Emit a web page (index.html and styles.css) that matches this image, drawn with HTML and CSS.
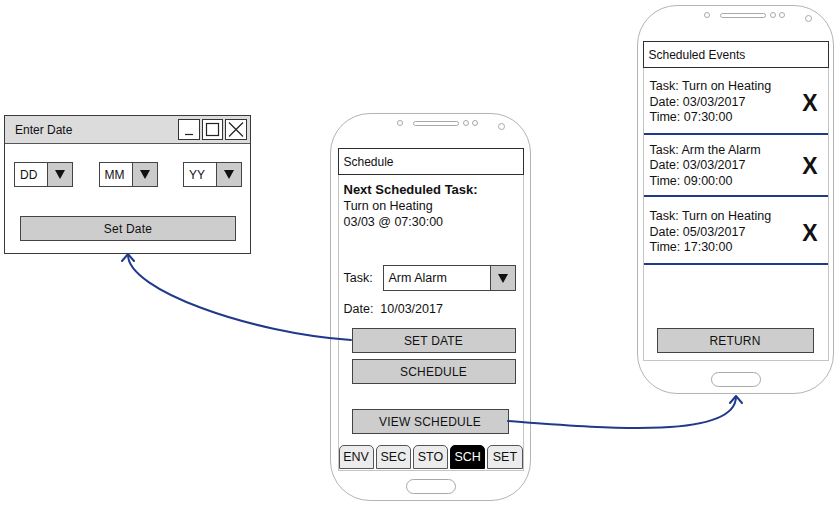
FILE: index.html
```html
<!DOCTYPE html>
<html>
<head>
<meta charset="utf-8">
<link rel="stylesheet" href="styles.css">
</head>
<body>
<div class="canvas">
  <div class="window">
    <div class="win-title">
      <span class="win-name">Enter Date</span>
      <div class="win-ctrls">
        <span class="ctrl"><svg width="20" height="19" viewBox="0 0 20 19"><path d="M6 14.5h8" stroke="#222" stroke-width="1.2" fill="none"/></svg></span>
        <span class="ctrl"><svg width="19" height="19" viewBox="0 0 19 19"><rect x="3.5" y="3.5" width="12" height="12" stroke="#222" stroke-width="1.2" fill="none"/></svg></span>
        <span class="ctrl"><svg width="20" height="19" viewBox="0 0 20 19"><path d="M3 2.5l14 14M17 2.5l-14 14" stroke="#222" stroke-width="1.2" fill="none"/></svg></span>
      </div>
    </div>
    <div class="win-body">
      <div class="date-row">
        <div class="combo small"><span class="combo-text">DD</span><span class="combo-arrow"><i class="tri"></i></span></div>
        <div class="combo small"><span class="combo-text">MM</span><span class="combo-arrow"><i class="tri"></i></span></div>
        <div class="combo small"><span class="combo-text">YY</span><span class="combo-arrow"><i class="tri"></i></span></div>
      </div>
      <div class="btn wide">Set Date</div>
    </div>
  </div>

  <div class="phone phone-a">
    <div class="sensors">
      <i class="dot"></i><i class="pill"></i><i class="dot"></i><i class="dot d2"></i><i class="cam"></i>
    </div>
    <div class="screen screen-a">
      <div class="titlebox">Schedule</div>
      <div class="next">
        <div class="bold">Next Scheduled Task:</div>
        <div>Turn on Heating</div>
        <div>03/03 @ 07:30:00</div>
      </div>
      <div class="task-row">
        <span class="lbl">Task:</span>
        <div class="combo task"><span class="combo-text">Arm Alarm</span><span class="combo-arrow"><i class="tri"></i></span></div>
      </div>
      <div class="date-line">Date:&nbsp; 10/03/2017</div>
      <div class="btn b1">SET DATE</div>
      <div class="btn b2">SCHEDULE</div>
      <div class="btn b3">VIEW SCHEDULE</div>
      <div class="tabs">
        <span class="tab">ENV</span>
        <span class="tab">SEC</span>
        <span class="tab">STO</span>
        <span class="tab active">SCH</span>
        <span class="tab">SET</span>
      </div>
    </div>
    <div class="home"></div>
  </div>

  <div class="phone phone-b">
    <div class="sensors">
      <i class="dot"></i><i class="pill"></i><i class="dot"></i><i class="dot d2"></i><i class="cam"></i>
    </div>
    <div class="screen screen-b">
      <div class="titlebox">Scheduled Events</div>
      <div class="event ev1">
        <div class="ev-text">
          <div>Task: Turn on Heating</div>
          <div>Date: 03/03/2017</div>
          <div>Time: 07:30:00</div>
        </div>
        <span class="ex">X</span>
      </div>
      <div class="event ev2">
        <div class="ev-text">
          <div>Task: Arm the Alarm</div>
          <div>Date: 03/03/2017</div>
          <div>Time: 09:00:00</div>
        </div>
        <span class="ex">X</span>
      </div>
      <div class="event ev3">
        <div class="ev-text">
          <div>Task: Turn on Heating</div>
          <div>Date: 05/03/2017</div>
          <div>Time: 17:30:00</div>
        </div>
        <span class="ex">X</span>
      </div>
      <div class="btn ret">RETURN</div>
    </div>
    <div class="home"></div>
  </div>

  <svg class="arrows" width="840" height="508" viewBox="0 0 840 508">
    <path d="M351,340 C250,333 128,290 128,255" />
    <path d="M122,261 L128,254 L134,261" />
    <path d="M508,421 C600,428 735,440 736,397" />
    <path d="M730,403 L736,396 L742,403" />
  </svg>
</div>
</body>
</html>
```
FILE: styles.css
```css
* { box-sizing: border-box; }
html, body { margin: 0; padding: 0; background: #fff; }
body {
  font-family: "Liberation Sans", Arial, sans-serif;
  font-size: 12.5px;
  color: #111;
}
.canvas { position: relative; width: 840px; height: 508px; overflow: hidden; }

/* ---------- window ---------- */
.window {
  position: absolute; left: 4px; top: 115px;
  width: 247px; height: 139px;
  border: 1.5px solid #3a3a3a;
  background: #fff;
  display: flex; flex-direction: column;
}
.win-title {
  height: 28px;
  background: #dcdcdc;
  border-bottom: 1.5px solid #555;
  display: flex; align-items: center; justify-content: space-between;
  padding: 0 3px 0 10px;
}
.win-name { font-size: 12px; }
.win-ctrls { display: flex; gap: 2px; }
.ctrl {
  display: flex; width: 22px; height: 21px;
  border: 1px solid #333; background: #fff;
  align-items: center; justify-content: center;
}
.ctrl:nth-child(2) { width: 21px; }
.win-body { padding: 18px 8px 0 9px; }
.date-row { display: flex; justify-content: space-between; }

.combo {
  display: flex; height: 25px;
  border: 1px solid #444; background: #fff;
}
.combo.small { width: 59px; }
.combo-text { flex: 1; display: flex; align-items: center; padding-left: 5px; font-size: 12px; }
.combo-arrow {
  width: 25px; background: #cbcbcb; border-left: 1px solid #444;
  display: flex; align-items: center; justify-content: center;
}
.tri {
  display: block; width: 0; height: 0;
  border-left: 5px solid transparent; border-right: 5px solid transparent;
  border-top: 9px solid #111;
}

.btn {
  height: 25px;
  background: #cdcdcd;
  border: 1.5px solid #444;
  display: flex; align-items: center; justify-content: center;
  font-size: 12px; letter-spacing: 0.2px;
}
.btn.wide { margin: 29px 6px 0 6px; height: 25px; }

/* ---------- phones ---------- */
.phone {
  position: absolute;
  border: 1.3px solid #b4b4b4;
  border-radius: 40px;
  background: #fff;
  display: flex; flex-direction: column; align-items: center;
}
.phone-a { left: 330px; top: 113px; width: 201px; height: 388px; }
.phone-b { left: 637px; top: 5px; width: 197px; height: 389px; }

.sensors {
  align-self: stretch;
  height: 34px;
  display: flex; align-items: flex-start;
  padding: 6px 0 0 66px;
}
.phone-b .sensors { height: 35px; }
.sensors i { display: block; border: 1px solid #a8a8a8; }
.dot { width: 6px; height: 6px; border-radius: 50%; margin-right: 10px; }
.pill { width: 46px; height: 5px; border-radius: 3px; margin-right: 4px; margin-top: 1px; }
.sensors .dot.d2 { margin-left: -7px; margin-right: 20px; }
.cam { width: 7px; height: 7px; border-radius: 50%; margin-top: 3px; }

.screen {
  width: 186px;
  border: 1px solid #c4c4c4;
  display: flex; flex-direction: column;
}
.screen-a { height: 323px; }
.screen-b { height: 320px; }
.titlebox {
  margin: -1px -1px 0 -1px;
  height: 27px;
  border: 1.3px solid #2e2e2e;
  display: flex; align-items: center;
  padding-left: 5px; font-size: 12px;
}

.next { padding: 7px 0 0 5px; line-height: 16px; }
.bold { font-weight: bold; font-size: 13px; }

.task-row { display: flex; align-items: center; margin-top: 35px; padding-left: 5px; }
.lbl { width: 39px; }
.combo.task { width: 133px; height: 26px; }
.combo.task .combo-text { font-size: 12.5px; }

.date-line { padding-left: 5px; margin-top: 10px; line-height: 16px; }

.b1 { margin: 11px 7px 0 13px; }
.b2 { margin: 6px 7px 0 13px; }
.b3 { margin: 25px 14px 0 13px; }

.tabs { display: flex; gap: 2px; margin: 11px 0 0 0; padding: 0; }
.tab {
  flex: 1; height: 24px;
  border: 1px solid #555;
  border-radius: 5px 5px 0 0;
  background: #ececec;
  display: flex; align-items: center; justify-content: center;
  font-size: 12.5px;
}
.tab.active { background: #000; color: #fff; border-color: #000; }

.home {
  width: 50px; height: 15px;
  border: 1px solid #a8a8a8; border-radius: 8px;
  margin-top: 8px;
}
.phone-b .home { margin-top: 11px; }

/* events */
.event {
  display: flex; align-items: center; justify-content: space-between;
  border-bottom: 2px solid #1f3a88;
  padding: 11px 10px 7px 6px;
  line-height: 15.5px;
}
.ev2 { padding-top: 8px; padding-bottom: 6px; }
.ev3 { padding-top: 12px; }
.ex { font-weight: bold; font-size: 23px; font-family: "Liberation Sans", Arial, sans-serif; margin-top: 2px; }
.btn.ret { margin: auto 14px 7px 13px; }

/* arrows */
.arrows { position: absolute; left: 0; top: 0; pointer-events: none; }
.arrows path { fill: none; stroke: #21398a; stroke-width: 2; stroke-linecap: round; stroke-linejoin: round; }
```
